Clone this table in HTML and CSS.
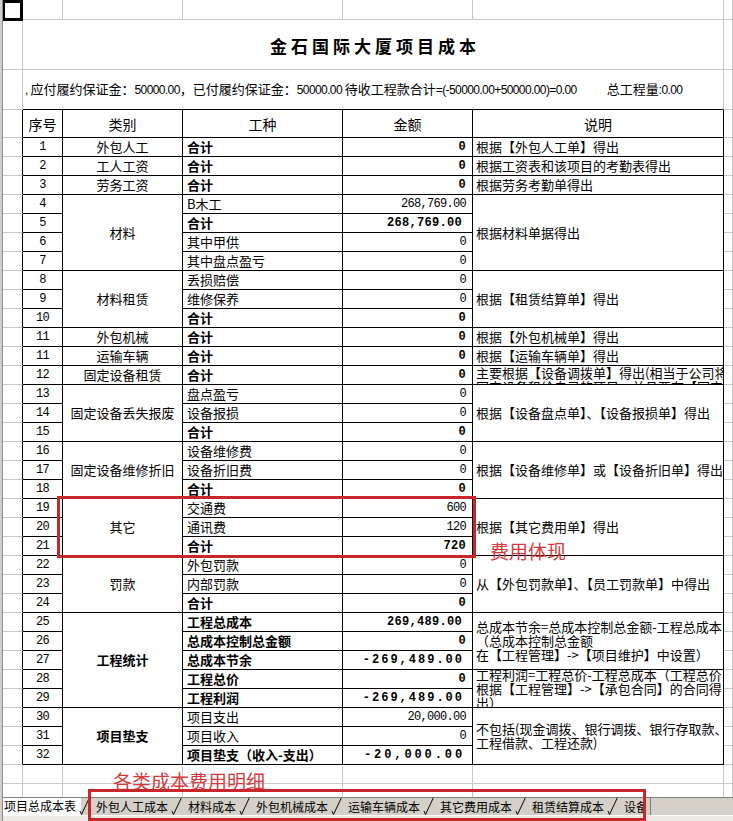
FILE: index.html
```html
<!DOCTYPE html>
<html lang="zh-CN">
<head>
<meta charset="utf-8">
<title>金石国际大厦项目成本</title>
<link rel="stylesheet" href="styles.css">
</head>
<body>
<div class="window">
  <div class="frame"></div>
  <div class="main">
    <div class="sheet-wrap">
      <table class="sheet">
        <colgroup>
          <col class="ca"><col class="cb"><col class="cc"><col class="cd"><col class="ce"><col class="cf"><col class="cg">
        </colgroup>
        <tr class="r-top">
          <td class="a1"><div class="sel"></div></td><td></td><td></td><td></td><td></td><td></td><td></td>
        </tr>
        <tr class="r-title">
          <td></td><td colspan="5" class="title">金石国际大厦项目成本</td><td></td>
        </tr>
        <tr class="r-info">
          <td></td><td colspan="5" class="info"><span class="lat">, </span>应付履约保证金：<span class="lat">50000.00</span>，已付履约保证金：<span class="lat">50000.00 </span>待收工程款合计<span class="lat">=(-50000.00+50000.00)=0.00</span><span class="gap"></span>总工程量<span class="lat">:0.00</span></td><td></td>
        </tr>
        <tr class="r-head">
          <td class="edge"></td><td class="t h">序号</td><td class="t h">类别</td><td class="t h">工种</td><td class="t h">金额</td><td class="t h">说明</td><td></td>
        </tr>
        <tr><td class="edge"></td><td class="t no">1</td><td class="t cat">外包人工</td><td class="t kind b">合计</td><td class="t amt b">0</td><td class="t note">根据【外包人工单】得出</td><td></td></tr>
        <tr><td class="edge"></td><td class="t no">2</td><td class="t cat">工人工资</td><td class="t kind b">合计</td><td class="t amt b">0</td><td class="t note">根据工资表和该项目的考勤表得出</td><td></td></tr>
        <tr><td class="edge"></td><td class="t no">3</td><td class="t cat">劳务工资</td><td class="t kind b">合计</td><td class="t amt b">0</td><td class="t note">根据劳务考勤单得出</td><td></td></tr>
        <tr><td class="edge"></td><td class="t no">4</td><td class="t cat" rowspan="4">材料</td><td class="t kind">B木工</td><td class="t amt">268,769.00</td><td class="t note" rowspan="4">根据材料单据得出</td><td></td></tr>
        <tr><td class="edge"></td><td class="t no">5</td><td class="t kind b">合计</td><td class="t amt b fmt">268,769.00</td><td></td></tr>
        <tr><td class="edge"></td><td class="t no">6</td><td class="t kind">其中甲供</td><td class="t amt">0</td><td></td></tr>
        <tr><td class="edge"></td><td class="t no">7</td><td class="t kind">其中盘点盈亏</td><td class="t amt">0</td><td></td></tr>
        <tr><td class="edge"></td><td class="t no">8</td><td class="t cat" rowspan="3">材料租赁</td><td class="t kind">丢损赔偿</td><td class="t amt">0</td><td class="t note" rowspan="3">根据【租赁结算单】得出</td><td></td></tr>
        <tr><td class="edge"></td><td class="t no">9</td><td class="t kind">维修保养</td><td class="t amt">0</td><td></td></tr>
        <tr><td class="edge"></td><td class="t no">10</td><td class="t kind b">合计</td><td class="t amt b">0</td><td></td></tr>
        <tr><td class="edge"></td><td class="t no">11</td><td class="t cat">外包机械</td><td class="t kind b">合计</td><td class="t amt b">0</td><td class="t note">根据【外包机械单】得出</td><td></td></tr>
        <tr><td class="edge"></td><td class="t no">11</td><td class="t cat">运输车辆</td><td class="t kind b">合计</td><td class="t amt b">0</td><td class="t note">根据【运输车辆单】得出</td><td></td></tr>
        <tr><td class="edge"></td><td class="t no">12</td><td class="t cat">固定设备租赁</td><td class="t kind b">合计</td><td class="t amt b">0</td><td class="t note"><div class="clip clip-12">主要根据【设备调拨单】得出(相当于公司将<br>固定设备租给自己的项目，并且要在【固定</div></td><td></td></tr>
        <tr><td class="edge"></td><td class="t no">13</td><td class="t cat" rowspan="3">固定设备丢失报废</td><td class="t kind">盘点盈亏</td><td class="t amt">0</td><td class="t note" rowspan="3">根据【设备盘点单】、【设备报损单】得出</td><td></td></tr>
        <tr><td class="edge"></td><td class="t no">14</td><td class="t kind">设备报损</td><td class="t amt">0</td><td></td></tr>
        <tr><td class="edge"></td><td class="t no">15</td><td class="t kind b">合计</td><td class="t amt b">0</td><td></td></tr>
        <tr><td class="edge"></td><td class="t no">16</td><td class="t cat" rowspan="3">固定设备维修折旧</td><td class="t kind">设备维修费</td><td class="t amt">0</td><td class="t note" rowspan="3">根据【设备维修单】或【设备折旧单】得出</td><td></td></tr>
        <tr><td class="edge"></td><td class="t no">17</td><td class="t kind">设备折旧费</td><td class="t amt">0</td><td></td></tr>
        <tr><td class="edge"></td><td class="t no">18</td><td class="t kind b">合计</td><td class="t amt b">0</td><td></td></tr>
        <tr><td class="edge"></td><td class="t no">19</td><td class="t cat" rowspan="3">其它</td><td class="t kind">交通费</td><td class="t amt">600</td><td class="t note" rowspan="3">根据【其它费用单】得出</td><td></td></tr>
        <tr><td class="edge"></td><td class="t no">20</td><td class="t kind">通讯费</td><td class="t amt">120</td><td></td></tr>
        <tr><td class="edge"></td><td class="t no">21</td><td class="t kind b">合计</td><td class="t amt b">720</td><td></td></tr>
        <tr><td class="edge"></td><td class="t no">22</td><td class="t cat" rowspan="3">罚款</td><td class="t kind">外包罚款</td><td class="t amt">0</td><td class="t note" rowspan="3">从【外包罚款单】、【员工罚款单】中得出</td><td></td></tr>
        <tr><td class="edge"></td><td class="t no">23</td><td class="t kind">内部罚款</td><td class="t amt">0</td><td></td></tr>
        <tr><td class="edge"></td><td class="t no">24</td><td class="t kind b">合计</td><td class="t amt b">0</td><td></td></tr>
        <tr><td class="edge"></td><td class="t no">25</td><td class="t cat b" rowspan="5">工程统计</td><td class="t kind b">工程总成本</td><td class="t amt b fmt">269,489.00</td><td class="t note" rowspan="3"><div class="clip clip-3">总成本节余=总成本控制总金额-工程总成本<br>（总成本控制总金额<br>在【工程管理】-&gt;【项目维护】中设置）</div></td><td></td></tr>
        <tr><td class="edge"></td><td class="t no">26</td><td class="t kind b">总成本控制总金额</td><td class="t amt b">0</td><td></td></tr>
        <tr><td class="edge"></td><td class="t no">27</td><td class="t kind b">总成本节余</td><td class="t amt b neg11">-269,489.00</td><td></td></tr>
        <tr><td class="edge"></td><td class="t no">28</td><td class="t kind b">工程总价</td><td class="t amt b">0</td><td class="t note" rowspan="2"><div class="clip clip-2">工程利润=工程总价-工程总成本（工程总价<br>根据【工程管理】-&gt;【承包合同】的合同得<br>出）</div></td><td></td></tr>
        <tr><td class="edge"></td><td class="t no">29</td><td class="t kind b">工程利润</td><td class="t amt b neg11">-269,489.00</td><td></td></tr>
        <tr><td class="edge"></td><td class="t no">30</td><td class="t cat b" rowspan="3">项目垫支</td><td class="t kind">项目支出</td><td class="t amt">20,000.00</td><td class="t note" rowspan="3"><div class="clip clip-3">不包括(现金调拨、银行调拨、银行存取款、<br>工程借款、工程还款)</div></td><td></td></tr>
        <tr><td class="edge"></td><td class="t no">31</td><td class="t kind">项目收入</td><td class="t amt">0</td><td></td></tr>
        <tr><td class="edge"></td><td class="t no">32</td><td class="t kind b">项目垫支（收入-支出）</td><td class="t amt b neg10">-20,000.00</td><td></td></tr>
        <tr class="r-empty"><td></td><td></td><td></td><td></td><td></td><td></td><td></td></tr>
        <tr class="r-empty"><td></td><td></td><td></td><td></td><td></td><td></td><td></td></tr>
      </table>
    </div>
    <div class="tabbar">
      <div class="tabs">
        <span class="tab active">项目总成本表</span>
        <svg class="slant" width="10" height="18" viewBox="0 0 10 18"><path d="M0.5 17.5 L8.5 0.5 M0.5 17.5 L-1 14" stroke="#000" stroke-width="1" fill="none"/></svg>
        <span class="tab">外包人工成本</span>
        <svg class="slant" width="10" height="18" viewBox="0 0 10 18"><path d="M0.5 17.5 L8.5 0.5 M0.5 17.5 L-1 14" stroke="#000" stroke-width="1" fill="none"/></svg>
        <span class="tab">材料成本</span>
        <svg class="slant" width="10" height="18" viewBox="0 0 10 18"><path d="M0.5 17.5 L8.5 0.5 M0.5 17.5 L-1 14" stroke="#000" stroke-width="1" fill="none"/></svg>
        <span class="tab">外包机械成本</span>
        <svg class="slant" width="10" height="18" viewBox="0 0 10 18"><path d="M0.5 17.5 L8.5 0.5 M0.5 17.5 L-1 14" stroke="#000" stroke-width="1" fill="none"/></svg>
        <span class="tab">运输车辆成本</span>
        <svg class="slant" width="10" height="18" viewBox="0 0 10 18"><path d="M0.5 17.5 L8.5 0.5 M0.5 17.5 L-1 14" stroke="#000" stroke-width="1" fill="none"/></svg>
        <span class="tab">其它费用成本</span>
        <svg class="slant" width="10" height="18" viewBox="0 0 10 18"><path d="M0.5 17.5 L8.5 0.5 M0.5 17.5 L-1 14" stroke="#000" stroke-width="1" fill="none"/></svg>
        <span class="tab">租赁结算成本</span>
        <svg class="slant" width="10" height="18" viewBox="0 0 10 18"><path d="M0.5 17.5 L8.5 0.5 M0.5 17.5 L-1 14" stroke="#000" stroke-width="1" fill="none"/></svg>
        <span class="tab cut">设备</span>
      </div>
      <div class="splitter"></div>
      <div class="hscroll"></div>
    </div>
    <div class="statusline"></div>
  </div>
</div>
<div class="mark mark-other"></div>
<div class="mark-text mark-text-other">费用体现</div>
<div class="mark-text mark-text-tabs">各类成本费用明细</div>
<div class="mark mark-tabs"></div>
</body>
</html>
```
FILE: styles.css
```css
* { box-sizing: border-box; }
html, body { margin: 0; padding: 0; background: #fff; }
body {
  width: 733px;
  height: 821px;
  overflow: hidden;
  position: relative;
  font-family: "Noto Sans CJK SC", sans-serif;
  font-size: 13px;
  color: #000;
}
.window { display: flex; height: 821px; }
.frame {
  width: 3px;
  flex: none;
  background: linear-gradient(to right, #d4d0c8 0 2px, #8c8c8c 2px 3px);
}
.main { flex: 1; min-width: 0; display: flex; flex-direction: column; }
.sheet-wrap { height: 797px; overflow: hidden; flex: none; }
.sheet {
  border-collapse: separate;
  border-spacing: 0;
  table-layout: fixed;
  width: 730px;
}
.ca { width: 20px; }
.cb { width: 40px; }
.cc { width: 120px; }
.cd { width: 160px; }
.ce { width: 130px; }
.cf { width: 251px; }
.cg { width: 9px; }
.sheet td {
  padding: 0;
  border-right: 1px solid #c8c8c8;
  border-bottom: 1px solid #c8c8c8;
  overflow: hidden;
  white-space: nowrap;
  vertical-align: middle;
  line-height: 16px;
}
.sheet tr { height: 19px; }
.sheet tr.r-top { height: 20px; }
.sheet tr.r-title { height: 50px; }
.sheet tr.r-info { height: 40px; }
.sheet tr.r-head { height: 28px; }

.a1 { position: relative; overflow: visible !important; }
.sel {
  position: absolute;
  left: -1px; top: 0;
  width: 21px; height: 21px;
  border: 3px solid #000;
}

.title {
  text-align: center;
  font-size: 17px;
  font-weight: bold;
  letter-spacing: 4px;
  padding-top: 2px !important;
  padding-left: 4px !important;
}
.info {
  font-size: 13px;
  padding-left: 2px !important;
  border-bottom-color: #000 !important;
}
.info .lat {
  font-family: "Liberation Sans", Arial, sans-serif;
  font-size: 12px;
  letter-spacing: -0.6px;
}
.info .gap { display: inline-block; width: 30px; }

.sheet td.edge { border-right-color: #000; }
.sheet td.t { border-right-color: #000; border-bottom-color: #000; }
.h { text-align: center; font-size: 14px; }
.no {
  text-align: center;
  font-family: "Liberation Mono", monospace;
  font-size: 12px;
  letter-spacing: -0.7px;
}
.cat { text-align: center; }
.kind { padding-left: 4px !important; }
.amt {
  text-align: right;
  padding-right: 6px !important;
  font-family: "Liberation Mono", monospace;
  font-size: 12px;
  letter-spacing: -0.7px;
}
.amt.b { letter-spacing: 0.3px; }
.amt.fmt { padding-right: 10px !important; }
.amt.neg11 { letter-spacing: 2px; padding-right: 8px !important; }
.amt.neg10 { letter-spacing: 2.9px; padding-right: 7px !important; }
.b { font-weight: bold; }
.note { padding-left: 3px !important; }
.clip {
  overflow: hidden;
  white-space: nowrap;
  line-height: 14px;
}
.clip-12 { height: 18px; margin-top: -1px; }
.clip-2 { height: 37px; display: flex; flex-direction: column; justify-content: center; }
.clip-3 { display: block; }

/* sheet tabs */
.tabbar {
  height: 18px;
  flex: none;
  display: flex;
  align-items: stretch;
  background: #d4d0c8;
  border-top: 1px solid #808080;
}
.tabs {
  display: flex;
  align-items: stretch;
  width: 642px;
  flex: none;
  overflow: hidden;
  font-size: 12px;
  line-height: 17px;
}
.tab { padding: 0 5px 0 5px; white-space: nowrap; }
.tab.active { background: #fff; padding-left: 1px; margin-top: -1px; }
.tab.cut { padding-right: 0; }
.slant { flex: none; display: block; overflow: visible; margin-top: -1px; }
.splitter {
  width: 6px;
  flex: none;
  border-left: 1px solid #808080;
  border-right: 1px solid #808080;
  background: #d4d0c8;
}
.hscroll { flex: 1; background: #d4d0c8; }
.statusline { flex: 1; background: #ece9e2; border-top: 1px solid #fff; }

/* annotations */
.mark {
  position: absolute;
  border: 3px solid #c8262b;
}
.mark-other { left: 57px; top: 496px; width: 419px; height: 62px; }
.mark-tabs { left: 88px; top: 789px; width: 558px; height: 32px; }
.mark-text {
  position: absolute;
  color: #d8393c;
  font-size: 19px;
  line-height: 20px;
  white-space: nowrap;
}
.mark-text-other { left: 490px; top: 541px; }
.mark-text-tabs { left: 113px; top: 771px; }
```
